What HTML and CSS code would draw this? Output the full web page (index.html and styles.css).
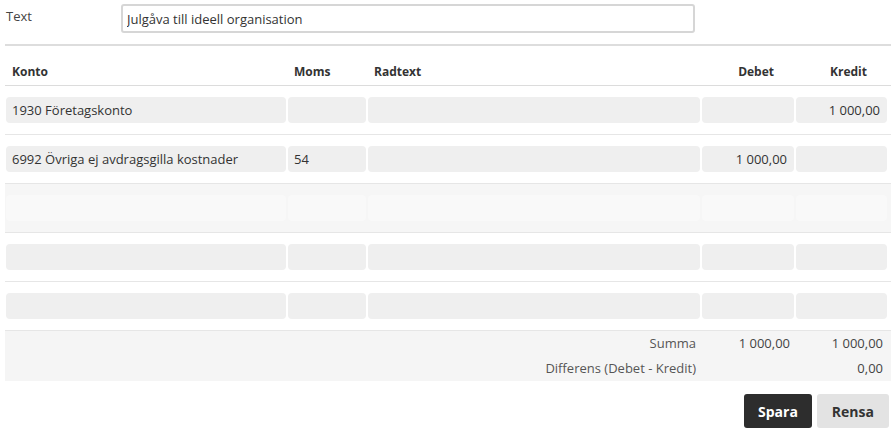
FILE: index.html
```html
<!DOCTYPE html>
<html lang="sv">
<head>
    <meta charset="UTF-8">
    <meta name="viewport" content="width=device-width, initial-scale=1.0">
    <title>Verifikation</title>
    <link rel="icon" href="data:,">
    <link rel="stylesheet" href="styles.css">
</head>
<body>
    <div class="page">
        <div class="text-row">
            <label for="ver-text">Text</label>
            <input type="text" id="ver-text" value="Julgåva till ideell organisation">
        </div>

        <div class="rows">
            <div class="row head">
                <div>Konto</div>
                <div>Moms</div>
                <div>Radtext</div>
                <div class="num">Debet</div>
                <div class="num">Kredit</div>
            </div>

            <div class="row">
                <input type="text" value="1930 Företagskonto">
                <input type="text" value="">
                <input type="text" value="">
                <input type="text" class="num" value="">
                <input type="text" class="num" value="1 000,00">
            </div>
            <div class="row">
                <input type="text" value="6992 Övriga ej avdragsgilla kostnader">
                <input type="text" value="54">
                <input type="text" value="">
                <input type="text" class="num" value="1 000,00">
                <input type="text" class="num" value="">
            </div>
            <div class="row hover">
                <input type="text" value="">
                <input type="text" value="">
                <input type="text" value="">
                <input type="text" class="num" value="">
                <input type="text" class="num" value="">
            </div>
            <div class="row">
                <input type="text" value="">
                <input type="text" value="">
                <input type="text" value="">
                <input type="text" class="num" value="">
                <input type="text" class="num" value="">
            </div>
            <div class="row">
                <input type="text" value="">
                <input type="text" value="">
                <input type="text" value="">
                <input type="text" class="num" value="">
                <input type="text" class="num" value="">
            </div>

            <div class="totals">
                <div class="total-line">
                    <span class="caption">Summa</span>
                    <span class="num">1 000,00</span>
                    <span class="num">1 000,00</span>
                </div>
                <div class="total-line">
                    <span class="caption">Differens (Debet - Kredit)</span>
                    <span class="num"></span>
                    <span class="num">0,00</span>
                </div>
            </div>
        </div>

        <div class="actions">
            <button class="btn btn-dark">Spara</button>
            <button class="btn btn-light">Rensa</button>
        </div>
    </div>
</body>
</html>
```

FILE: styles.css
```css
body {
    margin: 0;
    font-family: 'Open Sans', 'Liberation Sans', sans-serif;
    font-size: 13px;
    color: #333;
    background: #fff;
}

.page {
    padding: 0 4px 0 5px;
}

.text-row {
    display: flex;
    align-items: flex-start;
    padding: 4px 0 11px;
    border-bottom: 2px solid #ddd;
}

.text-row label {
    width: 115px;
    padding: 3px 0 0 1px;
    color: #444;
    line-height: 18px;
}

.text-row input {
    width: 574px;
    height: 29px;
    box-sizing: border-box;
    border: 2px solid #d6d6d6;
    border-radius: 3px;
    padding: 0 4px;
    font-family: inherit;
    font-size: 13px;
    color: #333;
    outline: none;
}

.row,
.total-line {
    display: grid;
    grid-template-columns: 280px 78px 332px 92px 91px;
    column-gap: 2px;
    padding: 0 4px 0 1px;
}

.row {
    padding-top: 11px;
    padding-bottom: 11px;
    border-bottom: 1px solid #e6e6e6;
}

.row.head {
    padding-top: 17px;
    padding-bottom: 5px;
    border-bottom-color: #dcdcdc;
    font-size: 12px;
    font-weight: bold;
    line-height: 17px;
}

.row.head div {
    padding-left: 6px;
}

.row.head .num {
    text-align: right;
    padding-right: 20px;
}

.row input {
    height: 26px;
    box-sizing: border-box;
    border: none;
    border-radius: 4px;
    background: #efefef;
    padding: 0 7px 0 6px;
    font-family: inherit;
    font-size: 13px;
    color: #333;
    min-width: 0;
    outline: none;
}

.row input.num {
    text-align: right;
}

.row.hover {
    background: #f6f6f6;
}

.row.hover input {
    background: #f9f9f9;
}

.totals {
    background: #f5f5f5;
}

.total-line {
    line-height: 25px;
    color: #444;
}

.total-line .caption {
    grid-column: 3;
    text-align: right;
    padding-right: 4px;
    color: #555;
}

.total-line .num {
    text-align: right;
    padding-right: 4px;
}

.actions {
    display: flex;
    justify-content: flex-end;
    gap: 5px;
    padding: 13px 2px 0 0;
}

.btn {
    height: 34px;
    border: none;
    border-radius: 3px;
    padding: 0 14px;
    font-family: inherit;
    font-size: 14px;
    font-weight: bold;
    cursor: pointer;
}

.btn-dark {
    background: #2d2d2d;
    color: #fff;
}

.btn-light {
    background: #e3e3e3;
    color: #333;
    padding: 0 15px;
}
```
